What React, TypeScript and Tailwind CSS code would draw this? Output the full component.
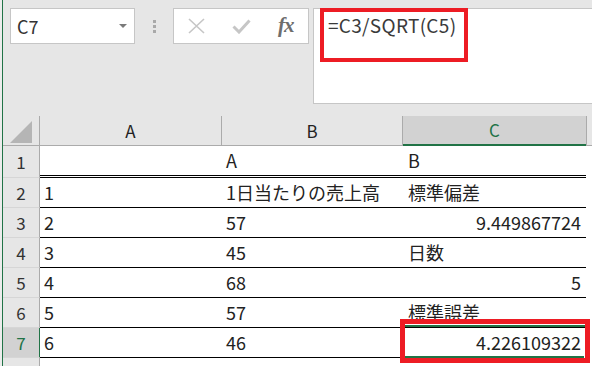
const rows: { n: number; a: string; b: string; c: string; cRight?: boolean }[] = [
  { n: 1, a: "", b: "A", c: "B" },
  { n: 2, a: "1", b: "1日当たりの売上高", c: "標準偏差" },
  { n: 3, a: "2", b: "57", c: "9.449867724", cRight: true },
  { n: 4, a: "3", b: "45", c: "日数" },
  { n: 5, a: "4", b: "68", c: "5", cRight: true },
  { n: 6, a: "5", b: "57", c: "標準誤差" },
  { n: 7, a: "6", b: "46", c: "4.226109322", cRight: true },
];

export default function App() {
  return (
    <div className="w-[592px] h-[366px] overflow-hidden flex bg-[#e6e6e6] font-['Noto_Sans_CJK_JP',sans-serif] text-[18px] text-[#222]">
      <div className="w-[2px] shrink-0 bg-[#ececec]" />
      <div className="w-px shrink-0 bg-[#217346]" />
      <div className="flex-1 flex flex-col relative">
        {/* toolbar */}
        <div className="h-[116px] shrink-0 flex items-start pt-2 pl-[7px]">
          <div className="w-[125px] h-[36px] shrink-0 bg-white border border-[#c6c6c6] flex items-center pl-[6px] pr-[7px] text-[#333]">
            <span className="flex-1 leading-none">C7</span>
            <svg width="8" height="4" viewBox="0 0 8 4">
              <path d="M0 0h8L4 4z" fill="#7a7a7a" />
            </svg>
          </div>
          <div className="w-[38px] h-[36px] shrink-0 flex flex-col items-center justify-center gap-[2px]">
            <div className="w-[3px] h-[3px] bg-[#a9a9a9]" />
            <div className="w-[3px] h-[3px] bg-[#a9a9a9]" />
            <div className="w-[3px] h-[3px] bg-[#a9a9a9]" />
          </div>
          <div className="w-[136px] h-[36px] shrink-0 bg-white border border-[#c6c6c6] flex">
            <div className="flex-1 flex items-center justify-center">
              <svg width="17" height="16" viewBox="0 0 17 16">
                <path d="M1 1l15 14M16 1L1 15" stroke="#c6c6c6" strokeWidth="1.6" fill="none" />
              </svg>
            </div>
            <div className="flex-1 flex items-center justify-center">
              <svg width="19" height="15" viewBox="0 0 19 15">
                <path d="M1.5 7.5l5.5 5.5L17.5 1.5" stroke="#c6c6c6" strokeWidth="3" fill="none" />
              </svg>
            </div>
            <div className="flex-1 flex items-center justify-center">
              <span className="font-['Liberation_Serif',serif] italic font-bold text-[21px] leading-none text-[#6e6e6e] tracking-[-1px] pb-[2px]">
                fx
              </span>
            </div>
          </div>
          <div className="ml-1 flex-1 h-[96px] bg-white border-y border-l border-[#c6c6c6] pl-[14px] pt-[4px] text-[#3a3a3a] text-[19px] tracking-[0.3px] leading-[24px]">
            =C3/SQRT(C5)
          </div>
        </div>

        {/* column header */}
        <div className="h-[30px] shrink-0 flex border-b border-[#ababab] text-[17px] text-[#222]">
          <div className="w-[37px] shrink-0 border-r border-[#ababab] flex items-end justify-center pb-[2px]">
            <svg width="22" height="22" viewBox="0 0 22 22">
              <path d="M22 0V22H0z" fill="#b5b5b5" />
            </svg>
          </div>
          <div className="w-[182px] shrink-0 border-r border-[#ababab] flex items-center justify-center">A</div>
          <div className="w-[181px] shrink-0 border-r border-[#ababab] flex items-center justify-center">B</div>
          <div className="w-[183px] h-[30px] shrink-0 bg-[#d2d2d2] border-b-2 border-[#217346] flex items-center justify-center text-[#217346]">
            C
          </div>
          <div className="w-px shrink-0 bg-[#ababab]" />
        </div>

        {/* data rows */}
        {rows.map((r) => {
          const sel = r.n === 7;
          return (
            <div key={r.n} className={`flex shrink-0 ${r.n === 1 ? "h-[32px]" : "h-[30px]"}`}>
              <div
                className={`w-[37px] shrink-0 flex items-center justify-center text-[17px] border-b border-b-[#d6d6d6] ${
                  sel ? "bg-[#d2d2d2] text-[#217346] border-r-2 border-r-[#217346] w-[38px] mr-[-1px]" : "border-r border-r-[#ababab] text-[#333]"
                }`}
              >
                {r.n}
              </div>
              <div
                className={`w-[546px] shrink-0 bg-white flex border-black ${
                  r.n === 1 ? "border-b-[3px] border-double" : "border-b"
                }`}
              >
                <div className="w-[182px] shrink-0 pl-1 flex items-center">{r.a}</div>
                <div className="w-[181px] shrink-0 pl-1 flex items-center">{r.b}</div>
                <div className={`w-[183px] shrink-0 flex items-center ${r.cRight ? "justify-end pr-[5px]" : "pl-[5px]"}`}>
                  {r.c}
                </div>
              </div>
              <div className="flex-1 bg-white" />
            </div>
          );
        })}
        <div className="flex flex-1">
          <div className="w-[37px] shrink-0 border-r border-[#ababab]" />
          <div className="flex-1 bg-white" />
        </div>

        {/* selection of C7 */}
        <div className="absolute left-[399px] top-[325px] w-[185px] h-[33px] border-2 border-[#217346]">
          <div className="absolute right-[-4px] bottom-[-4px] w-[5px] h-[5px] bg-[#217346] border border-white" />
        </div>

        {/* red annotation boxes */}
        <div className="absolute left-[317px] top-[8px] w-[148px] h-[54px] border-[4px] border-[#ed1c24]" />
        <div className="absolute left-[397px] top-[319px] w-[190px] h-[44px] border-[5px] border-[#ed1c24]" />
      </div>
    </div>
  );
}
